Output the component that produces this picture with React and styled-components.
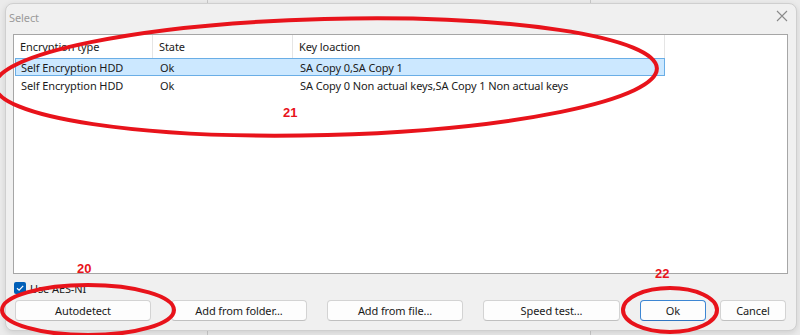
import React from "react";
import styled, { createGlobalStyle } from "styled-components";

const Global = createGlobalStyle`
  html, body { margin: 0; padding: 0; }
  body { font-family: "Noto Sans", "Liberation Sans", sans-serif; }
`;

const Page = styled.div`
  position: relative;
  width: 800px;
  height: 335px;
  overflow: hidden;
  box-sizing: border-box;
  padding: 3px 3px 4px 5px;
  background-color: #ebebeb;
  background-image:
    linear-gradient(#c9c9c9, #c9c9c9),
    linear-gradient(#c9c9c9, #c9c9c9);
  background-size: 1px 100%, 1px 100%;
  background-position: 207px 0, 590px 0;
  background-repeat: no-repeat;
`;

const Dialog = styled.div`
  box-sizing: border-box;
  width: 792px;
  height: 328px;
  display: flex;
  flex-direction: column;
  background: #f0f0f0;
  border: 1px solid #cfcfcf;
  border-radius: 8px;
  box-shadow: 0 2px 6px rgba(0, 0, 0, 0.12);
`;

const TitleBar = styled.div`
  height: 30px;
  display: flex;
  align-items: center;
  justify-content: space-between;
  padding: 0 6px 0 3px;
  flex-shrink: 0;
`;

const Title = styled.span`
  font-size: 11px;
  letter-spacing: -0.1px;
  color: #9b9b9b;
  margin-top: -4px;
`;

const CloseBtn = styled.div`
  width: 16px;
  height: 16px;
  display: flex;
  align-items: center;
  justify-content: center;
  margin-top: -6px;
`;

const Body = styled.div`
  flex: 1;
  display: flex;
  flex-direction: column;
  padding: 0 8px 10px 7px;
`;

const ListBox = styled.div`
  box-sizing: border-box;
  height: 240px;
  background: #ffffff;
  border: 1px solid #a6a6a6;
  display: flex;
  flex-direction: column;
`;

const Grid = styled.div`
  display: grid;
  grid-template-columns: 139px 140px 372px;
`;

const HeaderCell = styled.div`
  height: 23px;
  display: flex;
  align-items: center;
  padding-left: 6px;
  font-size: 11px;
  letter-spacing: -0.1px;
  color: #1a1a1a;
  border-right: 1px solid #e5e5e5;
  box-sizing: border-box;
`;

const Row = styled.div`
  display: grid;
  grid-template-columns: 138px 140px 371px;
  box-sizing: border-box;
  height: 18px;
  margin-left: 1px;
  width: 650px;
  align-items: center;
  background: ${(p) => (p.$selected ? "#cce8ff" : "transparent")};
  border: 1px solid ${(p) => (p.$selected ? "#6aaee6" : "transparent")};
`;

const Cell = styled.div`
  font-size: 11px;
  letter-spacing: -0.1px;
  color: #1a1a1a;
  padding-left: ${(p) => p.$pad}px;
  white-space: nowrap;
`;

const Options = styled.div`
  display: flex;
  align-items: center;
  gap: 4px;
  margin-top: 8px;
  height: 12px;
  padding-left: 1px;
`;

const Check = styled.div`
  width: 12px;
  height: 12px;
  border-radius: 2px;
  background: #005fb8;
  display: flex;
  align-items: center;
  justify-content: center;
`;

const CheckLabel = styled.span`
  font-size: 11px;
  letter-spacing: -0.1px;
  color: #1a1a1a;
`;

const ButtonRow = styled.div`
  display: flex;
  margin-top: 6px;
  padding-left: 2px;
`;

const Button = styled.button`
  box-sizing: border-box;
  width: ${(p) => p.$w}px;
  height: 21px;
  margin-right: ${(p) => p.$mr}px;
  padding: 0;
  background: #fdfdfd;
  border: 1px solid ${(p) => (p.$primary ? "#3d86d3" : "#d3d3d3")};
  border-bottom-color: ${(p) => (p.$primary ? "#2f75c2" : "#c0c0c0")};
  border-radius: 4px;
  font-family: "Noto Sans", "Liberation Sans", sans-serif;
  font-size: 11px;
  letter-spacing: -0.1px;
  color: #1a1a1a;
  line-height: 19px;
`;

const Overlay = styled.svg`
  position: absolute;
  left: 0;
  top: 0;
  pointer-events: none;
`;

const Num = styled.span`
  position: absolute;
  left: ${(p) => p.$x}px;
  top: ${(p) => p.$y}px;
  font-family: "Liberation Sans", Arial, sans-serif;
  font-weight: bold;
  font-size: 13px;
  color: #e8131b;
  line-height: 1;
`;

const rows = [
  ["Self Encryption HDD", "Ok", "SA Copy 0,SA Copy 1", true],
  ["Self Encryption HDD", "Ok", "SA Copy 0 Non actual keys,SA Copy 1 Non actual keys", false],
];

export default function App() {
  return (
    <>
      <Global />
      <Page>
        <Dialog>
          <TitleBar>
            <Title>Select</Title>
            <CloseBtn>
              <svg width="12" height="12" viewBox="0 0 12 12">
                <path d="M1 1L11 11M11 1L1 11" stroke="#8a8a8a" strokeWidth="1.1" />
              </svg>
            </CloseBtn>
          </TitleBar>
          <Body>
            <ListBox>
              <Grid>
                <HeaderCell>Encryption type</HeaderCell>
                <HeaderCell>State</HeaderCell>
                <HeaderCell>Key loaction</HeaderCell>
              </Grid>
              {rows.map((r, i) => (
                <Row key={i} $selected={r[3]}>
                  <Cell $pad={5}>{r[0]}</Cell>
                  <Cell $pad={6}>{r[1]}</Cell>
                  <Cell $pad={6}>{r[2]}</Cell>
                </Row>
              ))}
            </ListBox>
            <Options>
              <Check>
                <svg width="10" height="10" viewBox="0 0 10 10">
                  <path d="M2 5.2L4.1 7.2L8.2 2.8" stroke="#fff" strokeWidth="1.2" fill="none" />
                </svg>
              </Check>
              <CheckLabel>Use AES-NI</CheckLabel>
            </Options>
            <ButtonRow>
              <Button $w={136} $mr={20}>Autodetect</Button>
              <Button $w={136} $mr={20}>Add from folder...</Button>
              <Button $w={136} $mr={20}>Add from file...</Button>
              <Button $w={137} $mr={20}>Speed test...</Button>
              <Button $w={66} $mr={14} $primary>Ok</Button>
              <Button $w={66} $mr={0}>Cancel</Button>
            </ButtonRow>
          </Body>
        </Dialog>
        <Overlay width="800" height="335" viewBox="0 0 800 335">
          <g fill="none" stroke="#e8131b" strokeWidth="4">
            <ellipse cx="326" cy="77" rx="331" ry="58" transform="rotate(-1.5 326 77)" />
            <ellipse cx="88" cy="310" rx="86" ry="25" />
            <ellipse cx="670" cy="310" rx="47" ry="22" />
          </g>
        </Overlay>
        <Num $x={283} $y={106}>21</Num>
        <Num $x={77} $y={262}>20</Num>
        <Num $x={655} $y={267}>22</Num>
      </Page>
    </>
  );
}
